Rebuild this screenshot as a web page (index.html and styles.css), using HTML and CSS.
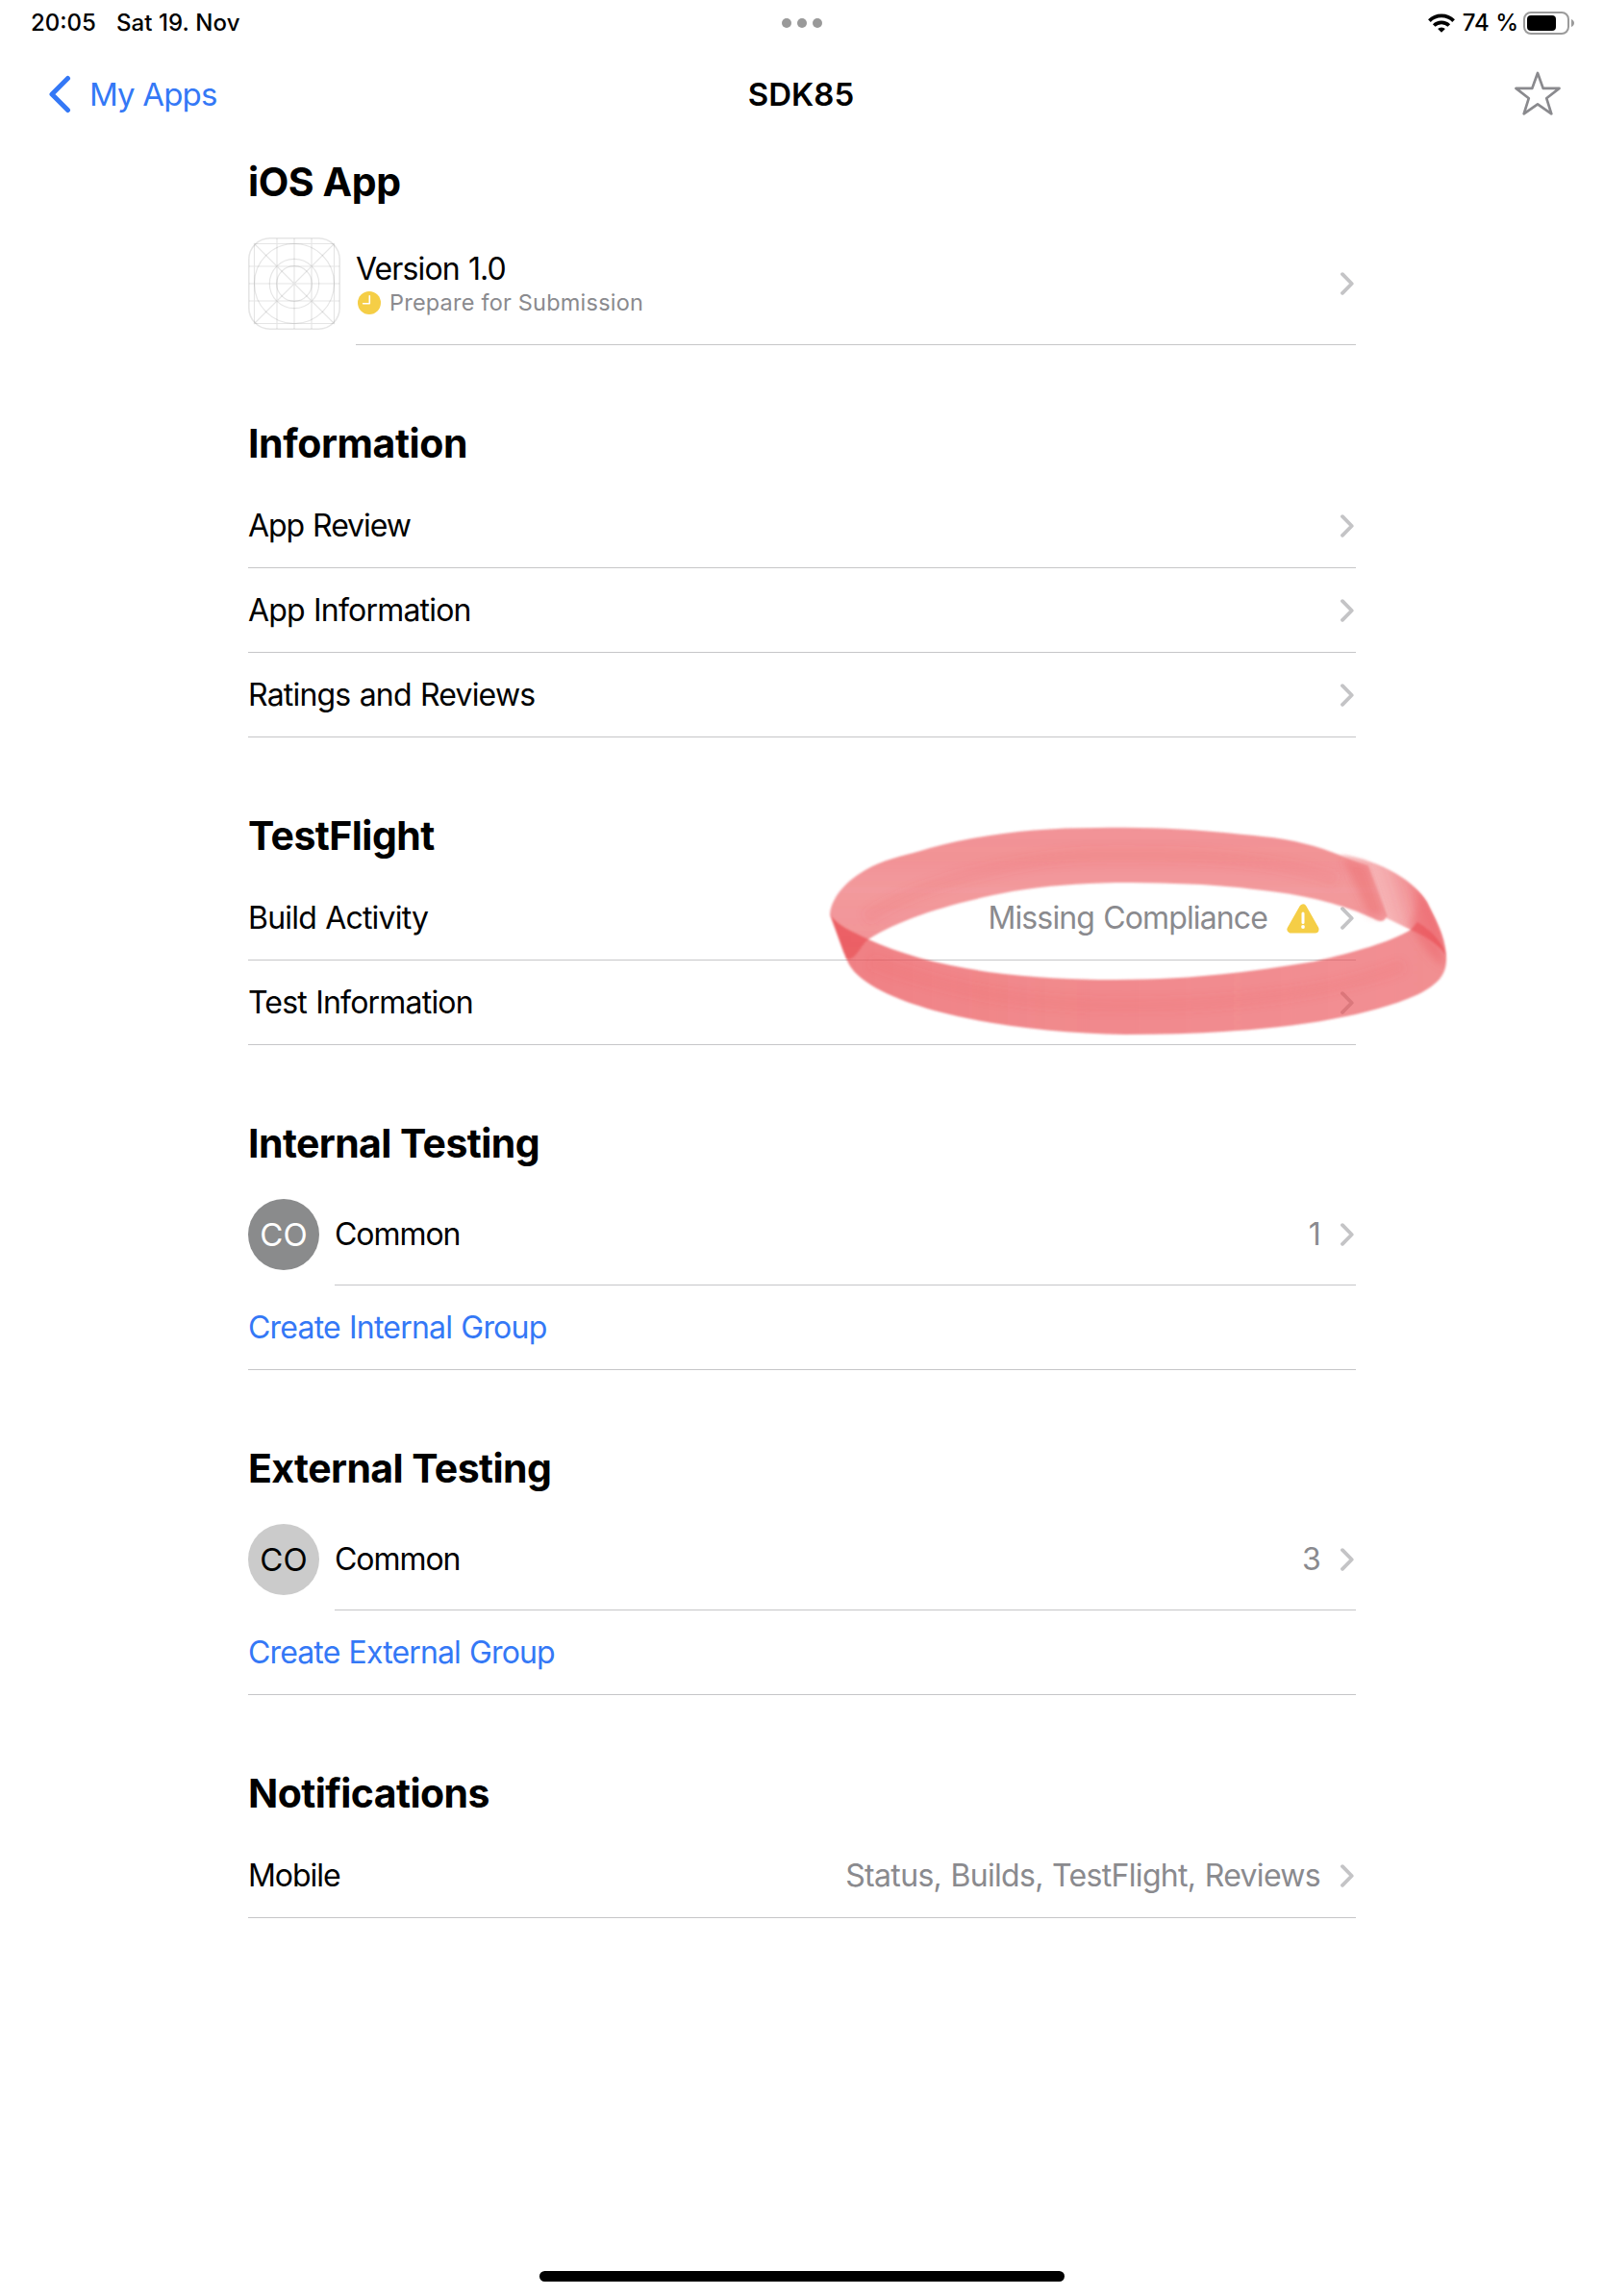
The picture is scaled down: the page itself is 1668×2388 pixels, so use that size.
FILE: index.html
```
<!DOCTYPE html>
<html lang="en">
<head>
<meta charset="utf-8">
<title>SDK85</title>
<link rel="stylesheet" href="styles.css">
</head>
<body>
<svg class="defs" width="0" height="0" aria-hidden="true">
  <symbol id="chevron" viewBox="0 0 16 24"><path d="M2 2.200 11.700 12 2 21.800" fill="none" stroke="currentColor" stroke-width="3.800" stroke-linecap="round" stroke-linejoin="round"/></symbol>
</svg>

<div class="screen">
  <div class="statusbar">
    <div class="status-left"><span class="time">20:05</span><span class="date">Sat 19. Nov</span></div>
    <div class="dots"><i></i><i></i><i></i></div>
    <div class="status-right">
      <svg class="wifi" width="28" height="20" viewBox="0 0 28 20">
        <g fill="none" stroke="#000" stroke-width="3.8">
          <path d="M1.4 7.6a18 18 0 0 1 25.2 0"/>
          <path d="M6.2 12.5a11.2 11.2 0 0 1 15.6 0"/>
        </g>
        <path d="M14 19.8 10.1 16a5.6 5.6 0 0 1 7.8 0z"/>
      </svg>
      <span class="percent">74 %</span>
      <svg class="battery" width="54" height="24" viewBox="0 0 54 24">
        <rect x="1" y="1" width="46" height="22" rx="7" fill="none" stroke="#9b9b9b" stroke-width="2"/>
        <rect x="4" y="4" width="30" height="16" rx="4"/>
        <path d="M50 8c4 1.500 4 6.500 0 8z" fill="#9b9b9b"/>
      </svg>
    </div>
  </div>

  <div class="navbar">
    <a class="back">
      <svg width="24" height="40" viewBox="0 0 24 40"><path d="M20.500 3.500 4 20l16.500 16.500" fill="none" stroke="currentColor" stroke-width="5" stroke-linecap="round" stroke-linejoin="round"/></svg>
      <span>My Apps</span>
    </a>
    <h1>SDK85</h1>
    <svg class="star" width="48" height="46" viewBox="0 0 48 46"><path d="M24 2 29.700 17.900H46.500L33.200 28.200 38.300 44.300 24 34.400 9.700 44.300 14.800 28.200 1.500 17.900H18.300z" fill="none" stroke="currentColor" stroke-width="2.700" stroke-linejoin="round"/></svg>
  </div>

  <main class="content">
    <section>
      <h2 class="t-wide">iOS App</h2>
      <div class="row row-app">
        <svg class="lead" width="96" height="96" viewBox="0 0 96 96" fill="none" stroke="#000" stroke-opacity=".1">
          <rect x=".8" y=".8" width="94.400" height="94.400" rx="22" stroke-width="1.600"/>
          <path d="M6.500 6v84M30 1v94M48 1v94M66 1v94M89.500 6v84M6 6.500h84M1 30h94M1 48h94M1 66h94M6 89.500h84M6 6l84 84M90 6 6 90" stroke-width="1.200"/>
          <circle cx="48" cy="48" r="41.500" stroke-width="1.200"/><circle cx="48" cy="48" r="25.700" stroke-width="1.200"/><circle cx="48" cy="48" r="18.300" stroke-width="1.200"/>
        </svg>
        <div class="cell">
          <div class="version">
            <span class="label t-version">Version 1.0</span>
            <span class="state">
              <svg width="24" height="24" viewBox="0 0 24 24"><circle cx="12" cy="12" r="12" fill="#f5ce46"/><path d="M12.300 4.800v8H5.600" fill="none" stroke="#fff" stroke-width="1.600" stroke-linecap="round" stroke-linejoin="round"/></svg>
              Prepare for Submission
            </span>
          </div>
          <svg class="chevron"><use href="#chevron"/></svg>
        </div>
      </div>
    </section>

    <section>
      <h2 class="t-wide">Information</h2>
      <div class="row"><div class="cell"><span class="label t-tight">App Review</span><svg class="chevron"><use href="#chevron"/></svg></div></div>
      <div class="row"><div class="cell"><span class="label">App Information</span><svg class="chevron"><use href="#chevron"/></svg></div></div>
      <div class="row"><div class="cell"><span class="label">Ratings and Reviews</span><svg class="chevron"><use href="#chevron"/></svg></div></div>
    </section>

    <section>
      <h2>TestFlight</h2>
      <div class="row"><div class="cell"><span class="label">Build Activity</span>
        <span class="value t-version">Missing Compliance</span>
        <svg class="warning" width="34" height="31" viewBox="0 0 34 31"><path d="M17 4.500 4.500 26.500h25z" fill="#f5ce46" stroke="#f5ce46" stroke-width="8" stroke-linejoin="round"/><path d="M17 10v9.500" stroke="#fff" stroke-width="3" stroke-linecap="round"/><circle cx="17" cy="24" r="1.900" fill="#fff"/></svg>
        <svg class="chevron"><use href="#chevron"/></svg></div></div>
      <div class="row"><div class="cell"><span class="label">Test Information</span><svg class="chevron"><use href="#chevron"/></svg></div></div>
    </section>

    <section>
      <h2>Internal Testing</h2>
      <div class="row row-group"><span class="avatar avatar-dark">CO</span><div class="cell"><span class="label t-tight">Common</span><span class="value">1</span><svg class="chevron"><use href="#chevron"/></svg></div></div>
      <div class="row"><div class="cell"><a class="label link">Create Internal Group</a></div></div>
    </section>

    <section>
      <h2>External Testing</h2>
      <div class="row row-group"><span class="avatar avatar-light">CO</span><div class="cell"><span class="label t-tight">Common</span><span class="value">3</span><svg class="chevron"><use href="#chevron"/></svg></div></div>
      <div class="row"><div class="cell"><a class="label link t-version">Create External Group</a></div></div>
    </section>

    <section>
      <h2>Notifications</h2>
      <div class="row"><div class="cell"><span class="label t-tight">Mobile</span><span class="value t-loose">Status, Builds, TestFlight, Reviews</span><svg class="chevron"><use href="#chevron"/></svg></div></div>
    </section>
  </main>

  <svg class="marker" width="660" height="236" viewBox="850 850 660 236">
    <defs>
      <filter id="soft" x="-5%" y="-5%" width="110%" height="110%"><feGaussianBlur stdDeviation="1.100"/></filter>
      <filter id="softer" x="-30%" y="-30%" width="160%" height="160%"><feGaussianBlur stdDeviation="4"/></filter>
      <linearGradient id="top" x1="0" y1="860" x2="0" y2="990" gradientUnits="userSpaceOnUse"><stop offset="0" stop-color="#e94b50" stop-opacity=".59"/><stop offset=".25" stop-color="#e94b50" stop-opacity=".6"/><stop offset=".5" stop-color="#e94b50" stop-opacity=".56"/><stop offset="1" stop-color="#e94b50" stop-opacity=".6"/></linearGradient>
      <linearGradient id="right" x1="1425" y1="935" x2="1478" y2="918" gradientUnits="userSpaceOnUse"><stop offset="0" stop-color="#e94b50" stop-opacity=".36"/><stop offset=".45" stop-color="#e94b50" stop-opacity=".48"/><stop offset="1" stop-color="#e9484e" stop-opacity=".7"/></linearGradient>
      <linearGradient id="low" x1="870" y1="0" x2="1500" y2="0" gradientUnits="userSpaceOnUse"><stop offset="0" stop-color="#e94b50" stop-opacity=".7"/><stop offset=".4" stop-color="#e94b50" stop-opacity=".65"/><stop offset="1" stop-color="#e94b50" stop-opacity=".62"/></linearGradient>
      <clipPath id="band"><path d="M1393 888C1440 896 1472 918 1484 938C1492 955 1504 975 1504 994C1500 1040 1440 1060 1360 1075V1000C1413 990 1447 977 1467 967L1442 955 1420 950z"/></clipPath>
    </defs>
    <g filter="url(#soft)">
      <path fill="url(#top)" d="M863 951C865 930 885 912 907 901C925 892 945 889 967 882C1022 867 1080 861 1140 861C1220 859 1270 866 1313 870C1345 873 1370 880 1395 890L1423 900 1442 953C1438 962 1432 957 1425 954C1390 938 1350 930 1313 926C1270 920 1220 918 1160 918C1120 919 1090 921 1053 927C1000 937 940 953 903 977C894 984 890 1000 880 997z"/>
      <path fill="url(#low)" d="M863 951C870 962 886 969 903 977C960 1003 1040 1019 1160 1019C1240 1019 1300 1011 1367 1000C1410 990 1445 980 1467 967L1474 959C1492 970 1500 982 1504 994C1505 1010 1500 1022 1473 1035C1410 1063 1300 1076 1170 1076C1070 1074 960 1058 905 1024C882 1009 882 1000 877 990z"/>
      <path fill="url(#right)" d="M1393 888C1440 896 1472 918 1484 938C1492 955 1502 970 1504 994C1498 985 1488 976 1467 967L1442 955 1423 900z"/>
    </g>
    <g clip-path="url(#band)">
      <path filter="url(#softer)" fill="#ea5a60" fill-opacity=".4" d="M1472 922C1488 938 1498 970 1503 1005C1488 1002 1476 975 1465 962C1475 950 1473 938 1472 922z"/>
    </g>
    <path filter="url(#softer)" fill="#e94b50" fill-opacity=".3" d="M1396 893 1422 901 1439 951 1424 952z"/>
    <g filter="url(#softer)" fill="none" stroke="#e9464c" stroke-opacity=".1" stroke-width="14">
      <path d="M900 955C960 915 1080 888 1160 889C1250 888 1330 895 1390 915"/>
      <path d="M905 1000C1000 1035 1080 1045 1170 1046C1280 1046 1390 1032 1460 1004"/>
    </g>
  </svg>

  <div class="home"></div>
</div>
</body>
</html>
```

FILE: styles.css
```
* { box-sizing: border-box; }

body {
  margin: 0;
  background: #fff;
  color: #000;
  font-family: Inter, "Liberation Sans", sans-serif;
  font-size: 32px;
}

.defs { position: absolute; }

.screen {
  position: relative;
  display: flex;
  flex-direction: column;
  width: 1668px;
  height: 2388px;
  overflow: hidden;
}

svg { display: block; flex: none; }

/* Status bar */
.statusbar {
  display: grid;
  grid-template-columns: 1fr auto 1fr;
  align-items: center;
  height: 47px;
  padding: 0 30px 0 32px;
  font-size: 24px;
  font-weight: 500;
  line-height: 46px;
}
.status-left { display: flex; gap: 21px; }
.date { letter-spacing: .1px; }
.dots { display: flex; gap: 6px; margin-left: -3px; }
.dots i { width: 10px; height: 10px; border-radius: 50%; background: #999; }
.status-right { display: flex; align-items: center; justify-content: flex-end; }
.percent { margin: 0 5px 0 8px; }

/* Navigation bar */
.navbar {
  display: grid;
  grid-template-columns: 1fr auto 1fr;
  align-items: center;
  height: 100px;
  padding: 2px 45px 0 50px;
}
.back {
  display: flex;
  align-items: center;
  gap: 19px;
  color: #3478f6;
  font-size: 33px;
  letter-spacing: -.85px;
}
.navbar h1 { margin: 0 0 0 -7px; font-size: 33px; font-weight: 600; }
.star { justify-self: end; margin-bottom: 3px; color: #8a8a8e; }

/* Lists */
.content { width: 1152px; margin-left: 258px; }

h2 {
  margin: 0;
  padding: 77px 0 17px;
  font-size: 41px;
  font-weight: 700;
  line-height: 50px;
  letter-spacing: -.58px;
}
section:first-child h2 { padding-top: 17px; }

.row { display: flex; align-items: stretch; gap: 16px; height: 88px; }
.row-app { height: 128px; }
.row-group { height: 106px; }
.lead, .avatar { margin-top: 16px; }

.cell {
  display: flex;
  flex: 1;
  align-items: center;
  border-bottom: 1px solid #c6c6c8;
}

.label, .value { letter-spacing: -.8px; word-spacing: 1px; }
.value { margin-left: auto; color: #8a8a8e; }
.label + .chevron, .version + .chevron { margin-left: auto; }
.value + .chevron { margin-left: 21px; }
.warning { margin: 1px 0 0 20px; }
.warning + .chevron { margin-left: 22px; }
.link { color: #3478f6; }
.chevron { width: 16px; height: 24px; color: #c4c4c6; }

.t-wide { letter-spacing: -.42px; }
.t-version { letter-spacing: -.87px; }
.t-tight { letter-spacing: -1.05px; }
.t-loose { letter-spacing: -.68px; }

.version { display: flex; flex-direction: column; }
.version .label { line-height: 40px; }
.state {
  display: flex;
  align-items: center;
  gap: 9px;
  padding-left: 2px;
  color: #8a8a8e;
  font-size: 23.5px;
  line-height: 30px;
  letter-spacing: .21px;
}

.avatar {
  width: 74px;
  height: 74px;
  border-radius: 50%;
  font-size: 33px;
  line-height: 74px;
  text-align: center;
}
.avatar-dark { background: #8a8b8c; color: #fff; }
.avatar-light { background: #cbcbcb; }

/* Highlighter stroke drawn over the list */
.marker { position: absolute; left: 850px; top: 850px; }

.home {
  width: 546px;
  height: 11px;
  margin: auto auto 15px;
  border-radius: 6px;
  background: #000;
}
```
